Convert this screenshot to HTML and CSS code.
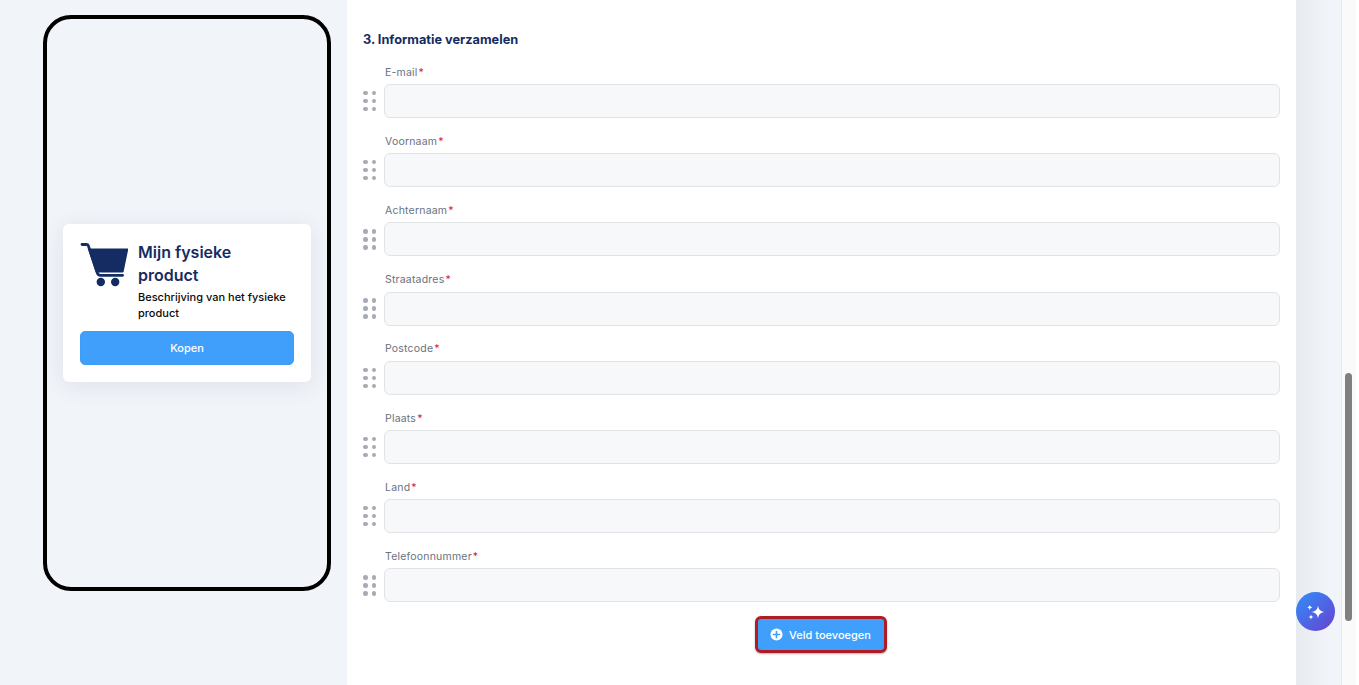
FILE: index.html
```html
<!DOCTYPE html>
<html lang="nl">
<head>
<meta charset="utf-8">
<title>Informatie verzamelen</title>
<link rel="stylesheet" href="styles.css">
</head>
<body>
<div class="app">
  <aside class="preview">
    <div class="phone">
      <div class="card">
        <div class="card-head">
          <svg class="cart" viewBox="0 0 48 44" width="48" height="44"><path d="M2 1.5h4.4c1 0 1.7.5 2 1.4l8.9 27c.4 1.4 1.5 2.4 3.1 2.4h22.2" fill="none" stroke="#152c63" stroke-width="2.8" stroke-linecap="round"/><path d="M7.8 5.6h39.6c.6 0 .9.4.8.9l-4.6 22.3c-.1.5-.4.7-.9.7H15.8z" fill="#152c63"/><circle cx="20.8" cy="39" r="4.2" fill="#152c63"/><circle cx="35.2" cy="39" r="4.2" fill="#152c63"/></svg>
          <div class="card-text">
            <h2 class="card-title">Mijn fysieke product</h2>
            <p class="card-desc">Beschrijving van het fysieke product</p>
          </div>
        </div>
        <button class="buy" type="button">Kopen</button>
      </div>
    </div>
  </aside>
  <main class="panel">
    <h3 class="section-title">3. Informatie verzamelen</h3>
    <div class="fields">
      <div class="field"><label class="field-label">E-mail<span class="req">*</span></label><div class="field-row"><span class="grip"><i></i><i></i><i></i><i></i><i></i><i></i></span><input class="field-input" type="text" aria-label="E-mail"></div></div>
      <div class="field"><label class="field-label">Voornaam<span class="req">*</span></label><div class="field-row"><span class="grip"><i></i><i></i><i></i><i></i><i></i><i></i></span><input class="field-input" type="text" aria-label="Voornaam"></div></div>
      <div class="field"><label class="field-label">Achternaam<span class="req">*</span></label><div class="field-row"><span class="grip"><i></i><i></i><i></i><i></i><i></i><i></i></span><input class="field-input" type="text" aria-label="Achternaam"></div></div>
      <div class="field"><label class="field-label">Straatadres<span class="req">*</span></label><div class="field-row"><span class="grip"><i></i><i></i><i></i><i></i><i></i><i></i></span><input class="field-input" type="text" aria-label="Straatadres"></div></div>
      <div class="field"><label class="field-label">Postcode<span class="req">*</span></label><div class="field-row"><span class="grip"><i></i><i></i><i></i><i></i><i></i><i></i></span><input class="field-input" type="text" aria-label="Postcode"></div></div>
      <div class="field"><label class="field-label">Plaats<span class="req">*</span></label><div class="field-row"><span class="grip"><i></i><i></i><i></i><i></i><i></i><i></i></span><input class="field-input" type="text" aria-label="Plaats"></div></div>
      <div class="field"><label class="field-label">Land<span class="req">*</span></label><div class="field-row"><span class="grip"><i></i><i></i><i></i><i></i><i></i><i></i></span><input class="field-input" type="text" aria-label="Land"></div></div>
      <div class="field"><label class="field-label">Telefoonnummer<span class="req">*</span></label><div class="field-row"><span class="grip"><i></i><i></i><i></i><i></i><i></i><i></i></span><input class="field-input" type="text" aria-label="Telefoonnummer"></div></div>
    </div>
    <div class="add-wrap">
      <button class="add" type="button">
        <svg viewBox="0 0 14 14" width="13" height="13"><circle cx="7" cy="7" r="6.5" fill="#fff"/><path d="M7 3.8v6.4M3.8 7h6.4" stroke="#3f9ffa" stroke-width="1.8" stroke-linecap="round"/></svg>
        Veld toevoegen
      </button>
    </div>
  </main>
  <div class="gutter"></div>
  <div class="scrollbar"><div class="thumb"></div></div>
</div>
<button class="assistant" type="button" aria-label="Assistent">
  <svg viewBox="0 0 24 24" width="24" height="24"><path d="M14 5.6c.7 4.2 2.3 5.8 6.5 6.5-4.2.7-5.8 2.3-6.5 6.5-.7-4.2-2.3-5.8-6.5-6.5 4.2-.7 5.8-2.3 6.5-6.5z" fill="#fff"/><path d="M5.8 4.8c.3 1.6 1 2.3 2.7 2.7-1.7.3-2.4 1-2.7 2.7-.3-1.7-1-2.4-2.7-2.7 1.7-.4 2.4-1.1 2.7-2.7zM7 14.4c.3 1.6 1 2.3 2.7 2.7-1.7.3-2.4 1-2.7 2.7-.3-1.7-1-2.4-2.7-2.7 1.7-.4 2.4-1.1 2.7-2.7z" fill="#fff"/></svg>
</button>
</body>
</html>
```
FILE: styles.css
```css
* { box-sizing: border-box; }
html, body { margin: 0; height: 685px; overflow: hidden; }
body { background: #f1f4f9; font-family: Inter, "Liberation Sans", sans-serif; color: #152c63; }
.app { display: flex; height: 685px; padding-left: 43px; }
.preview { width: 288px; flex: none; padding-top: 15px; }
.phone { width: 288px; height: 576px; border: 4px solid #000; border-radius: 28px; display: flex; align-items: center; justify-content: center; padding: 0 16px; }
.card { width: 248px; height: 158px; background: #fff; border-radius: 6px; box-shadow: 0 4px 24px rgba(30, 50, 90, .09); padding: 17px; }
.card-head { display: flex; gap: 9px; height: 90px; }
.cart { flex: none; margin-top: 2px; }
.card-text { min-width: 0; margin-left: 1px; }
.card-title { margin: 0 0 2px; font-size: 16px; line-height: 23px; font-weight: 600; color: #152c63; }
.card-desc { margin: 0; font-size: 11px; line-height: 16px; font-weight: 500; color: #0b0b0b; }
.buy { display: block; width: 214px; height: 34px; border: 1px solid #3d9df7; border-radius: 5px; background: #3f9ffa; color: #fff; font: 500 11px Inter, "Liberation Sans", sans-serif; }
.panel { width: 949px; flex: none; margin-left: 16px; background: #fff; padding: 31px 16px 0; }
.section-title { margin: 0; font-size: 12.75px; line-height: 17px; font-weight: 700; color: #152c63; }
.fields { margin-top: 16px; display: flex; flex-direction: column; gap: 11.2px; }
.field { height: 58px; display: flex; flex-direction: column; }
.field-label { height: 20px; padding: 0.6px 0 0 22px; font-size: 10.5px; line-height: 15px; color: #6a7280; letter-spacing: .2px; }
.req { color: #d2164f; margin-left: 1px; }
.field-row { display: flex; align-items: center; gap: 8px; }
.grip { width: 13px; flex: none; display: grid; grid-template-columns: 4.5px 4.5px; column-gap: 4px; row-gap: 3.5px; }
.grip i { width: 4.5px; height: 4.5px; border-radius: 50%; background: #a6abb5; }
.field-input { flex: 1; min-width: 0; height: 34px; border: 1px solid #e1e3e7; border-radius: 6px; background: #f7f8fa; }
.add-wrap { display: flex; justify-content: center; margin-top: 10px; padding-right: 2px; }
.add { height: 37px; width: 132px; display: flex; align-items: center; justify-content: center; gap: 6px; border: 3px solid #b01c26; border-radius: 6px; background: #3f9ffa; color: #fff; font: 500 11px Inter, "Liberation Sans", sans-serif; box-shadow: 0 1px 2px rgba(0, 0, 0, .3); padding: 0; }
.gutter { width: 45px; flex: none; background: linear-gradient(90deg, #e7eaef, #f1f4f9 70%); }
.scrollbar { width: 18px; flex: none; background: linear-gradient(90deg, #fafafa 14px, #fff 14px); border-left: 1px solid #e6e8ec; padding: 373px 0 0 3px; }
.thumb { width: 7px; height: 248px; border-radius: 4px; background: #808080; }
.assistant { position: absolute; left: 1296px; top: 592px; width: 39px; height: 39px; padding: 0; border: 0; border-radius: 50%; background: linear-gradient(135deg, #2f90fb, #6a3fd0); display: flex; align-items: center; justify-content: center; }
```
